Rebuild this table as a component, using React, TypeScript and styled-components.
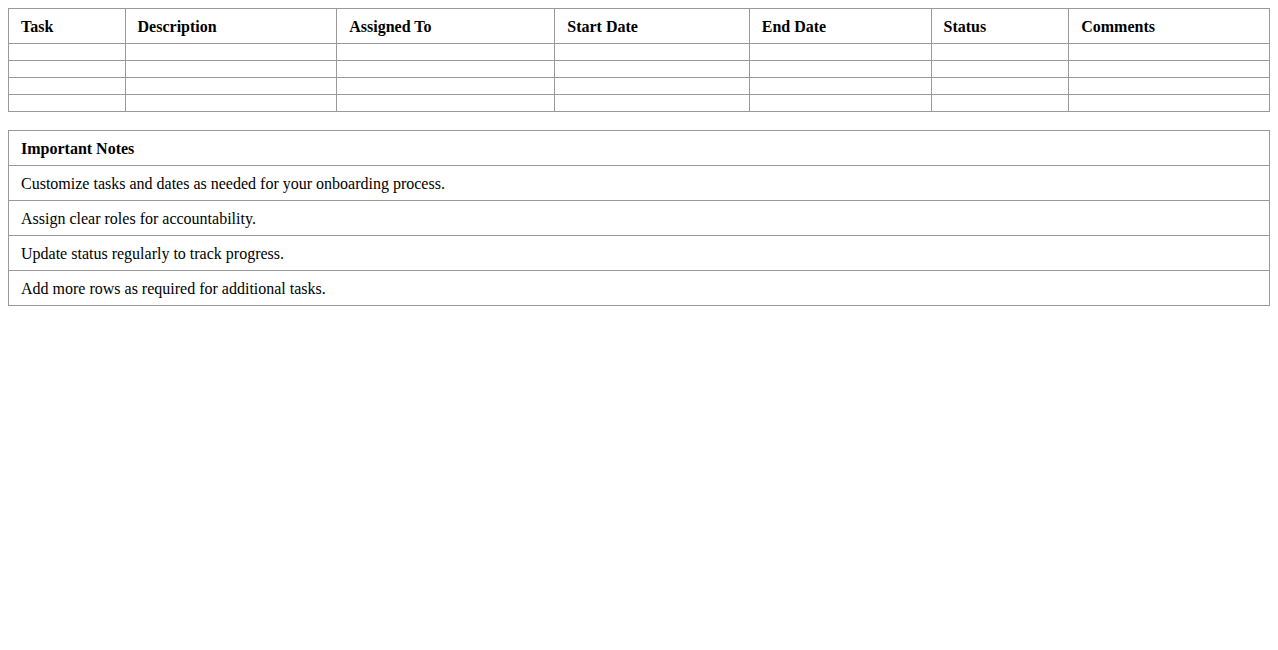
import React from "react";
import styled, { createGlobalStyle } from "styled-components";

const Global = createGlobalStyle`
  body {
    margin: 8px;
    font-family: "Liberation Serif", "Times New Roman", serif;
    font-size: 16px;
    color: #000;
    background: #fff;
  }
`;

const Table = styled.table`
  width: 100%;
  border-collapse: collapse;
  margin-bottom: 18px;
`;

const Th = styled.th`
  border: 1px solid #999;
  padding: 9px 12px 7px;
  text-align: left;
  font-weight: bold;
`;

const Td = styled.td`
  border: 1px solid #999;
  padding: 9px 12px 7px;
  text-align: left;
`;

const headers = ["Task", "Description", "Assigned To", "Start Date", "End Date", "Status", "Comments"];
const notes = [
  "Customize tasks and dates as needed for your onboarding process.",
  "Assign clear roles for accountability.",
  "Update status regularly to track progress.",
  "Add more rows as required for additional tasks.",
];

export default function App() {
  return (
    <>
      <Global />
      <Table>
        <thead>
          <tr>
            {headers.map((h) => (
              <Th key={h}>{h}</Th>
            ))}
          </tr>
        </thead>
        <tbody>
          {[0, 1, 2, 3].map((r) => (
            <tr key={r}>
              {headers.map((h) => (
                <Td key={h}></Td>
              ))}
            </tr>
          ))}
        </tbody>
      </Table>
      <Table>
        <thead>
          <tr>
            <Th>Important Notes</Th>
          </tr>
        </thead>
        <tbody>
          {notes.map((n) => (
            <tr key={n}>
              <Td>{n}</Td>
            </tr>
          ))}
        </tbody>
      </Table>
    </>
  );
}
